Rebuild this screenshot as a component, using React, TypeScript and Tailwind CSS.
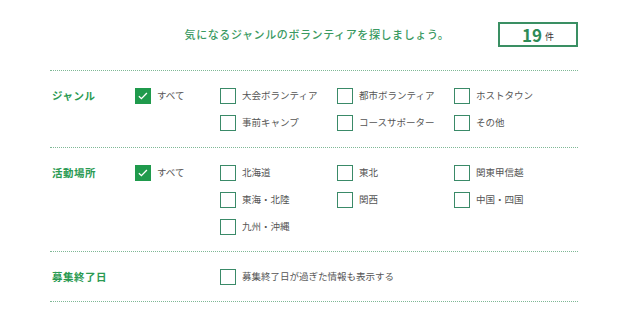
import React from 'react';

type Row = string[];

const sections: { label: string; all?: boolean; rows: Row[] }[] = [
  {
    label: 'ジャンル',
    all: true,
    rows: [
      ['大会ボランティア', '都市ボランティア', 'ホストタウン'],
      ['事前キャンプ', 'コースサポーター', 'その他'],
    ],
  },
  {
    label: '活動場所',
    all: true,
    rows: [
      ['北海道', '東北', '関東甲信越'],
      ['東海・北陸', '関西', '中国・四国'],
      ['九州・沖縄'],
    ],
  },
  {
    label: '募集終了日',
    rows: [['募集終了日が過ぎた情報も表示する']],
  },
];

function Box({ checked }: { checked?: boolean }) {
  if (checked) {
    return (
      <span className="flex h-4 w-4 shrink-0 items-center justify-center bg-[#1f9a4c]">
        <svg viewBox="0 0 16 16" className="h-3 w-3" fill="none" stroke="#fff" strokeWidth="1.8">
          <path d="M2.5 8.2l3.4 3.3 7.3-7.4" />
        </svg>
      </span>
    );
  }
  return <span className="h-4 w-4 shrink-0 border-[1.5px] border-[#3a8a68] bg-white" />;
}

function Option({ text, checked }: { text: string; checked?: boolean }) {
  return (
    <label className="flex h-4 items-center gap-[6px] whitespace-nowrap">
      <Box checked={checked} />
      <span className="text-[9.5px] leading-none text-[#555]">{text}</span>
    </label>
  );
}

export default function App() {
  return (
    <div
      className="min-h-screen bg-white"
      style={{ fontFamily: '"Noto Sans CJK JP", "Noto Sans", sans-serif' }}
    >
      <div className="ml-[50px] w-[528px] pt-[22px]">
        <div className="grid grid-cols-[80px_1fr_80px] items-center">
          <div />
          <p className="pl-[6px] text-center text-[11px] font-medium tracking-[0.6px] text-[#3b9a62]">
            気になるジャンルのボランティアを探しましょう。
          </p>
          <div className="flex h-[25px] items-center justify-center gap-[3px] border-2 border-[#3a8f63]">
            <span className="text-[17px] font-semibold leading-none text-[#2e8b57]">19</span>
            <span className="mt-[3px] text-[9px] leading-none text-[#333]">件</span>
          </div>
        </div>

        <div className="mt-[23px] border-t border-dotted border-[#7fb896]" />

        {sections.map((s) => (
          <div key={s.label} className="border-b border-dotted border-[#7fb896] pt-[17px] pb-[16px]">
            <div className="grid grid-cols-[85px_85px_117px_117px_1fr]">
              <div className="flex h-4 items-center pl-[2px] text-[10.5px] font-bold tracking-[0.5px] text-[#2a9a52]">
                {s.label}
              </div>
              <div>{s.all && <Option text="すべて" checked />}</div>
              <div className="col-span-3 flex flex-col gap-[11px]">
                {s.rows.map((r, i) => (
                  <div key={i} className="grid grid-cols-[117px_117px_1fr]">
                    {r.map((t) => (
                      <Option key={t} text={t} />
                    ))}
                  </div>
                ))}
              </div>
            </div>
          </div>
        ))}
      </div>
    </div>
  );
}
